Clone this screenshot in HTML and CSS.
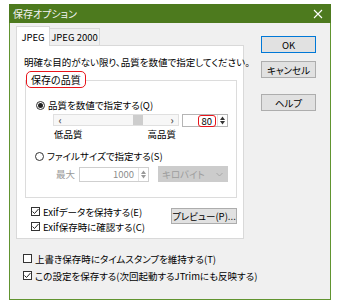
FILE: index.html
```html
<!DOCTYPE html>
<html>
<head>
  <title>保存オプション</title>
  <link rel="stylesheet" href="styles.css">
</head>
<body>
  <div class="dialog">
    <div class="titlebar">
      <span>保存オプション</span>
      <svg class="close" width="10" height="10" viewBox="0 0 10 10"><path d="M1 1L9 9M9 1L1 9" stroke="#fff" stroke-width="1.1"/></svg>
    </div>
    <div class="body">
      <div class="main">
        <div class="tabs">
          <div class="tab active">JPEG</div>
          <div class="tab">JPEG 2000</div>
        </div>
        <div class="panel">
          <p class="note">明確な目的がない限り、品質を数値で指定してください。</p>
          <div class="group">
            <div class="legend">保存の品質</div>
            <div class="row radio-row">
              <span class="radio checked"></span>品質を数値で指定する(Q)
            </div>
            <div class="scroll-row">
              <div class="scrollbar">
                <span class="arrow">&lsaquo;</span>
                <span class="track"><span class="thumb"></span></span>
                <span class="arrow">&rsaquo;</span>
              </div>
              <div class="edit quality">
                <span class="value"><span class="mark">80</span></span>
                <span class="spin">
                  <svg width="5" height="4" viewBox="0 0 5 4"><path d="M0 4L2.5 0.5L5 4Z" fill="#333"/></svg>
                  <svg width="5" height="4" viewBox="0 0 5 4"><path d="M0 0L2.5 3.5L5 0Z" fill="#333"/></svg>
                </span>
              </div>
            </div>
            <div class="row scale">
              <span>低品質</span><span>高品質</span>
            </div>
            <div class="row radio-row second">
              <span class="radio"></span>ファイルサイズで指定する(S)
            </div>
            <div class="max-row">
              <span class="dim">最大</span>
              <div class="edit size">
                <span class="value">1000</span>
                <span class="spin">
                  <svg width="5" height="4" viewBox="0 0 5 4"><path d="M0 4L2.5 0.5L5 4Z" fill="#999"/></svg>
                  <svg width="5" height="4" viewBox="0 0 5 4"><path d="M0 0L2.5 3.5L5 0Z" fill="#999"/></svg>
                </span>
              </div>
              <div class="combo">
                <span>キロバイト</span>
                <svg width="7" height="5" viewBox="0 0 7 5"><path d="M0.5 1L3.5 4L6.5 1" stroke="#a8a8a8" fill="none"/></svg>
              </div>
            </div>
          </div>
          <div class="exif-row">
            <div class="checks">
              <div class="check-row">
                <span class="box"><svg width="7" height="7" viewBox="0 0 7 7"><path d="M0.5 3.5L2.5 5.5L6.5 1" stroke="#222" fill="none"/></svg></span>Exifデータを保持する(E)
              </div>
              <div class="check-row">
                <span class="box"><svg width="7" height="7" viewBox="0 0 7 7"><path d="M0.5 3.5L2.5 5.5L6.5 1" stroke="#222" fill="none"/></svg></span>Exif保存時に確認する(C)
              </div>
            </div>
            <button class="btn preview">プレビュー(P)...</button>
          </div>
        </div>
        <div class="bottom">
          <div class="check-row">
            <span class="box"></span>上書き保存時にタイムスタンプを維持する(T)
          </div>
          <div class="check-row">
            <span class="box"><svg width="7" height="7" viewBox="0 0 7 7"><path d="M0.5 3.5L2.5 5.5L6.5 1" stroke="#222" fill="none"/></svg></span>この設定を保存する(次回起動するJTrimにも反映する)
          </div>
        </div>
      </div>
      <div class="side">
        <button class="btn default">OK</button>
        <button class="btn cancel">キャンセル</button>
        <button class="btn help">ヘルプ</button>
      </div>
    </div>
  </div>
</body>
</html>
```

FILE: styles.css
```css
body {
  margin: 0;
  background: #fff;
  font-family: "Noto Sans CJK JP", "Noto Sans", sans-serif;
  font-size: 9.5px;
  color: #000;
  font-feature-settings: "palt";
}
.dialog {
  margin: 4px 0 0 9px;
  width: 322px;
  height: 296px;
  display: flex;
  flex-direction: column;
}
.titlebar {
  height: 19px;
  background: #4d7a1e;
  color: #f4f4f4;
  font-size: 10px;
  display: flex;
  align-items: center;
  justify-content: space-between;
  padding: 0 8px 0 4px;
}
.body {
  flex: 1;
  background: #f0f0f0;
  border: 1px solid #619430;
  border-top: none;
  display: flex;
  padding: 3px 0 0 6px;
}
.main {
  width: 228px;
}
.tabs {
  display: flex;
  align-items: flex-end;
  height: 19px;
}
.tab {
  box-sizing: border-box;
  height: 17px;
  width: 50px;
  border: 1px solid #d9d9d9;
  border-bottom: none;
  border-left: none;
  background: #f0f0f0;
  display: flex;
  align-items: center;
  justify-content: center;
}
.tab.active {
  width: 34px;
  height: 20px;
  margin-bottom: -1px;
  border-left: 1px solid #d9d9d9;
  background: #fff;
  position: relative;
  z-index: 1;
}
.panel {
  box-sizing: border-box;
  height: 194px;
  border: 1px solid #d9d9d9;
  background: #fff;
  padding: 10px 6px 0 8px;
}
.note {
  margin: 0 0 0 -1px;
  height: 13px;
  line-height: 13px;
  white-space: nowrap;
}
.group {
  box-sizing: border-box;
  margin-top: 11px;
  height: 118px;
  border: 1px solid #dcdcdc;
}
.legend {
  box-sizing: border-box;
  width: fit-content;
  height: 17px;
  margin-top: -10px;
  padding: 0 4px;
  border: 1px solid #e8141b;
  border-radius: 5px;
  background: #fff;
  font-size: 10px;
  line-height: 15px;
}
.row {
  display: flex;
  align-items: center;
  height: 12px;
  white-space: nowrap;
}
.radio-row {
  margin-top: 11px;
  padding-left: 10px;
}
.radio-row.second {
  margin-top: 10px;
  padding-left: 9px;
}
.radio {
  box-sizing: border-box;
  width: 9px;
  height: 9px;
  margin-right: 3px;
  border: 1px solid #333;
  border-radius: 50%;
  background: #fff;
  display: flex;
  align-items: center;
  justify-content: center;
}
.radio.checked::after {
  content: "";
  width: 5px;
  height: 5px;
  border-radius: 50%;
  background: #222;
}
.scroll-row {
  display: flex;
  gap: 3px;
  margin-top: 3px;
  padding-left: 27px;
  height: 13px;
}
.scrollbar {
  box-sizing: border-box;
  width: 126px;
  height: 12px;
  border: 1px solid #e0e0e0;
  background: #f7f7f7;
  display: grid;
  grid-template-columns: 12px 1fr 12px;
  align-items: center;
}
.arrow {
  text-align: center;
  font-size: 10px;
  font-weight: bold;
  line-height: 10px;
  color: #555;
}
.track {
  height: 10px;
}
.thumb {
  display: block;
  width: 10px;
  height: 10px;
  margin-left: 67px;
  background: #cdcdcd;
}
.edit {
  box-sizing: border-box;
  display: flex;
  border: 1px solid #b5b5b5;
  background: #fff;
}
.edit.quality {
  width: 46px;
  height: 13px;
}
.value {
  flex: 1;
  display: flex;
  justify-content: flex-end;
  align-items: center;
  padding-right: 1px;
  line-height: 11px;
}
.mark {
  box-sizing: border-box;
  width: 18px;
  height: 12px;
  margin-top: 1px;
  padding-right: 3px;
  border: 1px solid #e8141b;
  border-radius: 3px;
  text-align: right;
  line-height: 10px;
}
.spin {
  width: 9px;
  border-left: 1px solid #e2e2e2;
  display: flex;
  flex-direction: column;
  align-items: center;
  justify-content: center;
  gap: 1px;
}
.spin svg {
  display: block;
}
.scale {
  margin-top: 1px;
  margin-left: 28px;
  width: 122px;
  justify-content: space-between;
}
.max-row {
  display: flex;
  align-items: center;
  height: 16px;
  margin-top: 4px;
  padding-left: 30px;
}
.dim {
  color: #9a9a9a;
  width: 23px;
}
.edit.size {
  width: 70px;
  height: 15px;
  border-color: #cfcfcf;
  color: #8c8c8c;
}
.edit.size .value {
  padding-right: 4px;
}
.combo {
  box-sizing: border-box;
  width: 70px;
  height: 16px;
  margin-left: 9px;
  padding: 0 5px 0 4px;
  background: #cccccc;
  color: #9d9d9d;
  display: flex;
  align-items: center;
  justify-content: space-between;
}
.exif-row {
  width: 212px;
  margin-top: 7px;
  display: flex;
  justify-content: space-between;
}
.checks {
  padding-left: 6px;
}
.check-row {
  display: flex;
  align-items: center;
  height: 13px;
  white-space: nowrap;
}
.check-row + .check-row {
  margin-top: 2px;
}
.box {
  box-sizing: border-box;
  width: 9px;
  height: 9px;
  margin-right: 3px;
  border: 1px solid #333;
  background: #fff;
  display: flex;
  align-items: center;
  justify-content: center;
}
.box svg {
  display: block;
}
.btn {
  box-sizing: border-box;
  font-family: inherit;
  font-size: 9.5px;
  font-feature-settings: "palt";
  color: #000;
  background: #e1e1e1;
  border: 1px solid #adadad;
  padding: 0;
  display: block;
}
.preview {
  width: 66px;
  height: 16px;
  margin-top: 3px;
}
.bottom {
  padding-left: 7px;
}
.bottom .check-row:first-child {
  margin-top: 13px;
}
.bottom .check-row + .check-row {
  margin-top: 4px;
}
.side {
  margin-left: 17px;
  padding-top: 10px;
}
.side .btn {
  width: 55px;
  height: 17px;
}
.btn.default {
  border-color: #0078d7;
}
.btn.cancel {
  margin-top: 8px;
}
.btn.help {
  margin-top: 16px;
}
```
